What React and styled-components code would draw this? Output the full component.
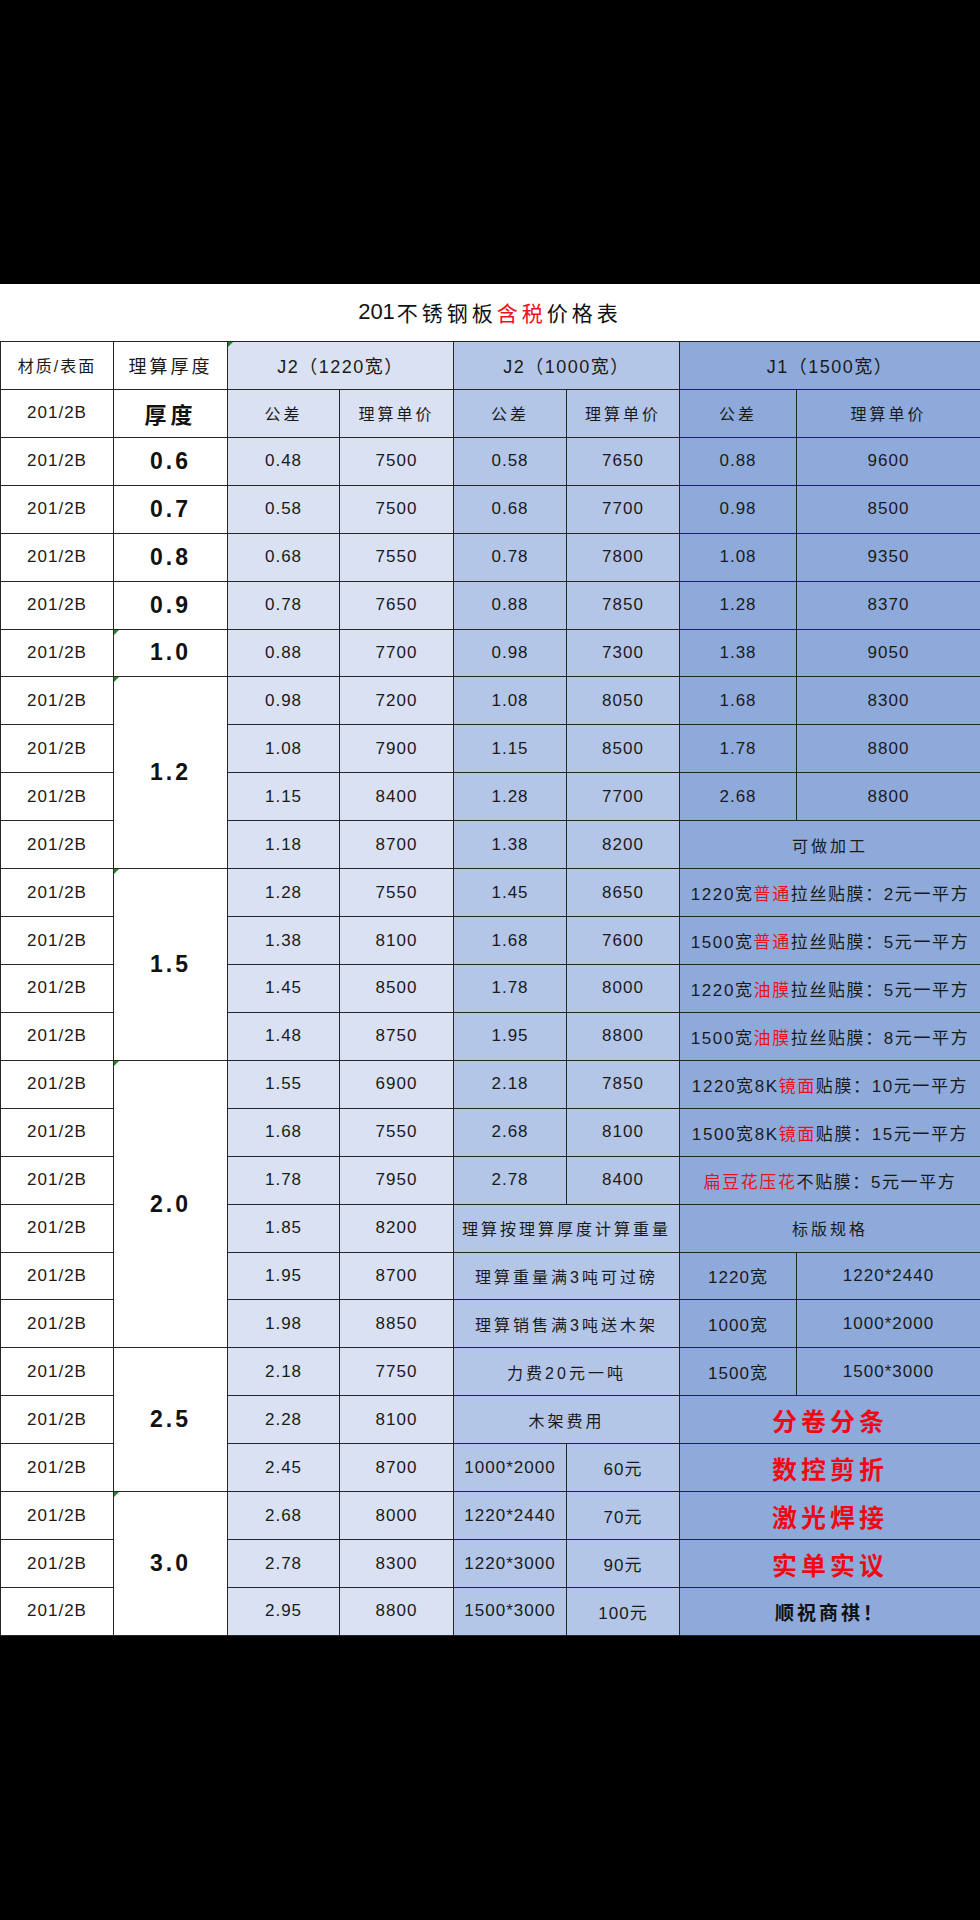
import styled, { createGlobalStyle, css } from "styled-components";

const GlobalStyle = createGlobalStyle`
  html, body {
    margin: 0;
    padding: 0;
    background: #000;
  }
  body {
    font-family: "Liberation Sans", "Noto Sans CJK SC", sans-serif;
    color: #111;
  }
`;

const fills = {
  w: "#ffffff",
  a: "#d9e1f2",
  b: "#b4c6e7",
  c: "#8eaadb",
};

const rows = [
  { th: ["0.6", 1], a: ["0.48", "7500"], b: ["0.58", "7650"], c: ["0.88", "9600"] },
  { th: ["0.7", 1], a: ["0.58", "7500"], b: ["0.68", "7700"], c: ["0.98", "8500"] },
  { th: ["0.8", 1], a: ["0.68", "7550"], b: ["0.78", "7800"], c: ["1.08", "9350"] },
  { th: ["0.9", 1], a: ["0.78", "7650"], b: ["0.88", "7850"], c: ["1.28", "8370"] },
  { th: ["1.0", 1, true], a: ["0.88", "7700"], b: ["0.98", "7300"], c: ["1.38", "9050"] },
  { th: ["1.2", 4, true], a: ["0.98", "7200"], b: ["1.08", "8050"], c: ["1.68", "8300"] },
  { a: ["1.08", "7900"], b: ["1.15", "8500"], c: ["1.78", "8800"] },
  { a: ["1.15", "8400"], b: ["1.28", "7700"], c: ["2.68", "8800"] },
  { a: ["1.18", "8700"], b: ["1.38", "8200"], c: { note: "可做加工" } },
  { th: ["1.5", 4, true], a: ["1.28", "7550"], b: ["1.45", "8650"], c: { film: ["1220宽", "普通", "拉丝贴膜：2元一平方"] } },
  { a: ["1.38", "8100"], b: ["1.68", "7600"], c: { film: ["1500宽", "普通", "拉丝贴膜：5元一平方"] } },
  { a: ["1.45", "8500"], b: ["1.78", "8000"], c: { film: ["1220宽", "油膜", "拉丝贴膜：5元一平方"] } },
  { a: ["1.48", "8750"], b: ["1.95", "8800"], c: { film: ["1500宽", "油膜", "拉丝贴膜：8元一平方"] } },
  { th: ["2.0", 6, true], a: ["1.55", "6900"], b: ["2.18", "7850"], c: { film: ["1220宽8K", "镜面", "贴膜：10元一平方"] } },
  { a: ["1.68", "7550"], b: ["2.68", "8100"], c: { film: ["1500宽8K", "镜面", "贴膜：15元一平方"] } },
  { a: ["1.78", "7950"], b: ["2.78", "8400"], c: { film: ["", "扁豆花压花", "不贴膜：5元一平方"] } },
  { a: ["1.85", "8200"], b: { note: "理算按理算厚度计算重量" }, c: { note: "标版规格" } },
  { a: ["1.95", "8700"], b: { note: "理算重量满3吨可过磅" }, c: ["1220宽", "1220*2440"] },
  { a: ["1.98", "8850"], b: { note: "理算销售满3吨送木架" }, c: ["1000宽", "1000*2000"] },
  { th: ["2.5", 3], a: ["2.18", "7750"], b: { note: "力费20元一吨" }, c: ["1500宽", "1500*3000"] },
  { a: ["2.28", "8100"], b: { note: "木架费用" }, c: { red: "分卷分条" } },
  { a: ["2.45", "8700"], b: ["1000*2000", "60元"], c: { red: "数控剪折" } },
  { th: ["3.0", 3, true], a: ["2.68", "8000"], b: ["1220*2440", "70元"], c: { red: "激光焊接" } },
  { a: ["2.78", "8300"], b: ["1220*3000", "90元"], c: { red: "实单实议" } },
  { a: ["2.95", "8800"], b: ["1500*3000", "100元"], c: { closing: "顺祝商祺！" } },
];

const Pair = ({ data, fill }) => {
  if (Array.isArray(data)) {
    return (
      <>
        <Cell $fill={fill}>{data[0]}</Cell>
        <Cell $fill={fill}>{data[1]}</Cell>
      </>
    );
  }
  if (data.note) {
    return (
      <NoteCell colSpan={2} $fill={fill}>
        {data.note}
      </NoteCell>
    );
  }
  if (data.film) {
    const [pre, hot, post] = data.film;
    return (
      <FilmCell colSpan={2} $fill={fill}>
        {pre}
        <Hot>{hot}</Hot>
        {post}
      </FilmCell>
    );
  }
  if (data.red) {
    return (
      <SloganCell colSpan={2} $fill={fill} $red>
        {data.red}
      </SloganCell>
    );
  }
  return (
    <SloganCell colSpan={2} $fill={fill}>
      {data.closing}
    </SloganCell>
  );
};

export default function App() {
  return (
    <Page>
      <GlobalStyle />
      <Sheet>
        <Title>
          <Digits>201</Digits>不锈钢板<Hot>含税</Hot>价格表
        </Title>
        <Table>
          <colgroup>
            <col style={{ width: 113 }} />
            <col style={{ width: 114 }} />
            <col style={{ width: 112 }} />
            <col style={{ width: 114 }} />
            <col style={{ width: 113 }} />
            <col style={{ width: 113 }} />
            <col style={{ width: 117 }} />
            <col style={{ width: 184 }} />
          </colgroup>
          <tbody>
            <Row>
              <HeadCell>材质/表面</HeadCell>
              <HeadCell $wide>理算厚度</HeadCell>
              <GroupCell colSpan={2} $fill="a" $mark>
                J2（1220宽）
              </GroupCell>
              <GroupCell colSpan={2} $fill="b">
                J2（1000宽）
              </GroupCell>
              <GroupCell colSpan={2} $fill="c">
                J1（1500宽）
              </GroupCell>
            </Row>
            <Row>
              <Cell>201/2B</Cell>
              <ThickCell $kanji>厚度</ThickCell>
              <LabelCell $fill="a">公差</LabelCell>
              <LabelCell $fill="a">理算单价</LabelCell>
              <LabelCell $fill="b">公差</LabelCell>
              <LabelCell $fill="b">理算单价</LabelCell>
              <LabelCell $fill="c">公差</LabelCell>
              <LabelCell $fill="c">理算单价</LabelCell>
            </Row>
            {rows.map((r, i) => (
              <Row key={i}>
                <Cell>201/2B</Cell>
                {r.th && (
                  <ThickCell rowSpan={r.th[1]} $mark={r.th[2]}>
                    {r.th[0]}
                  </ThickCell>
                )}
                <Pair data={r.a} fill="a" />
                <Pair data={r.b} fill="b" />
                <Pair data={r.c} fill="c" />
              </Row>
            ))}
          </tbody>
        </Table>
      </Sheet>
    </Page>
  );
}

const Page = styled.div`
  min-height: 1920px;
  padding-top: 284px;
  box-sizing: border-box;
  background: #000;
`;

const Sheet = styled.div`
  background: #fff;
  width: 980px;
`;

const Title = styled.h1`
  margin: 0;
  height: 57px;
  display: flex;
  align-items: center;
  justify-content: center;
  padding-bottom: 2px;
  box-sizing: border-box;
  font-size: 21px;
  font-weight: 400;
  letter-spacing: 4px;
  color: #111;
`;

const Digits = styled.span`
  letter-spacing: 0;
  font-size: 22px;
  margin-right: 2px;
`;

const Hot = styled.span`
  color: #e8121c;
`;

const Table = styled.table`
  width: 980px;
  table-layout: fixed;
  border-collapse: collapse;
  background: #fff;
`;

const Row = styled.tr`
  height: 47.93px;
`;

const Cell = styled.td`
  position: relative;
  padding: 0;
  border: 1px solid #262626;
  background: ${(p) => fills[p.$fill || "w"]};
  text-align: center;
  vertical-align: middle;
  white-space: nowrap;
  overflow: hidden;
  font-size: 17px;
  letter-spacing: 1px;
  color: #1a1a1a;

  ${(p) =>
    p.$mark &&
    css`
      &::before {
        content: "";
        position: absolute;
        left: 0;
        top: 0;
        border-top: 5px solid #1e8a2a;
        border-right: 5px solid transparent;
      }
    `}
`;

const HeadCell = styled(Cell)`
  font-size: ${(p) => (p.$wide ? "18px" : "16px")};
  letter-spacing: ${(p) => (p.$wide ? "3px" : "2px")};
`;

const GroupCell = styled(Cell)`
  font-size: 18px;
  letter-spacing: 1.5px;
`;

const LabelCell = styled(Cell)`
  font-size: 16px;
  letter-spacing: 3px;
`;

const ThickCell = styled(Cell)`
  font-weight: 700;
  font-size: ${(p) => (p.$kanji ? "22px" : "23px")};
  letter-spacing: ${(p) => (p.$kanji ? "4px" : "3px")};
  color: #111;
`;

const NoteCell = styled(Cell)`
  font-size: 16px;
  letter-spacing: 3px;
`;

const FilmCell = styled(Cell)`
  font-size: 17px;
  letter-spacing: 1.6px;
  text-align: center;
`;

const SloganCell = styled(Cell)`
  font-weight: 700;
  font-size: ${(p) => (p.$red ? "25px" : "19px")};
  letter-spacing: ${(p) => (p.$red ? "4px" : "3px")};
  color: ${(p) => (p.$red ? "#ee0a14" : "#111")};
`;
